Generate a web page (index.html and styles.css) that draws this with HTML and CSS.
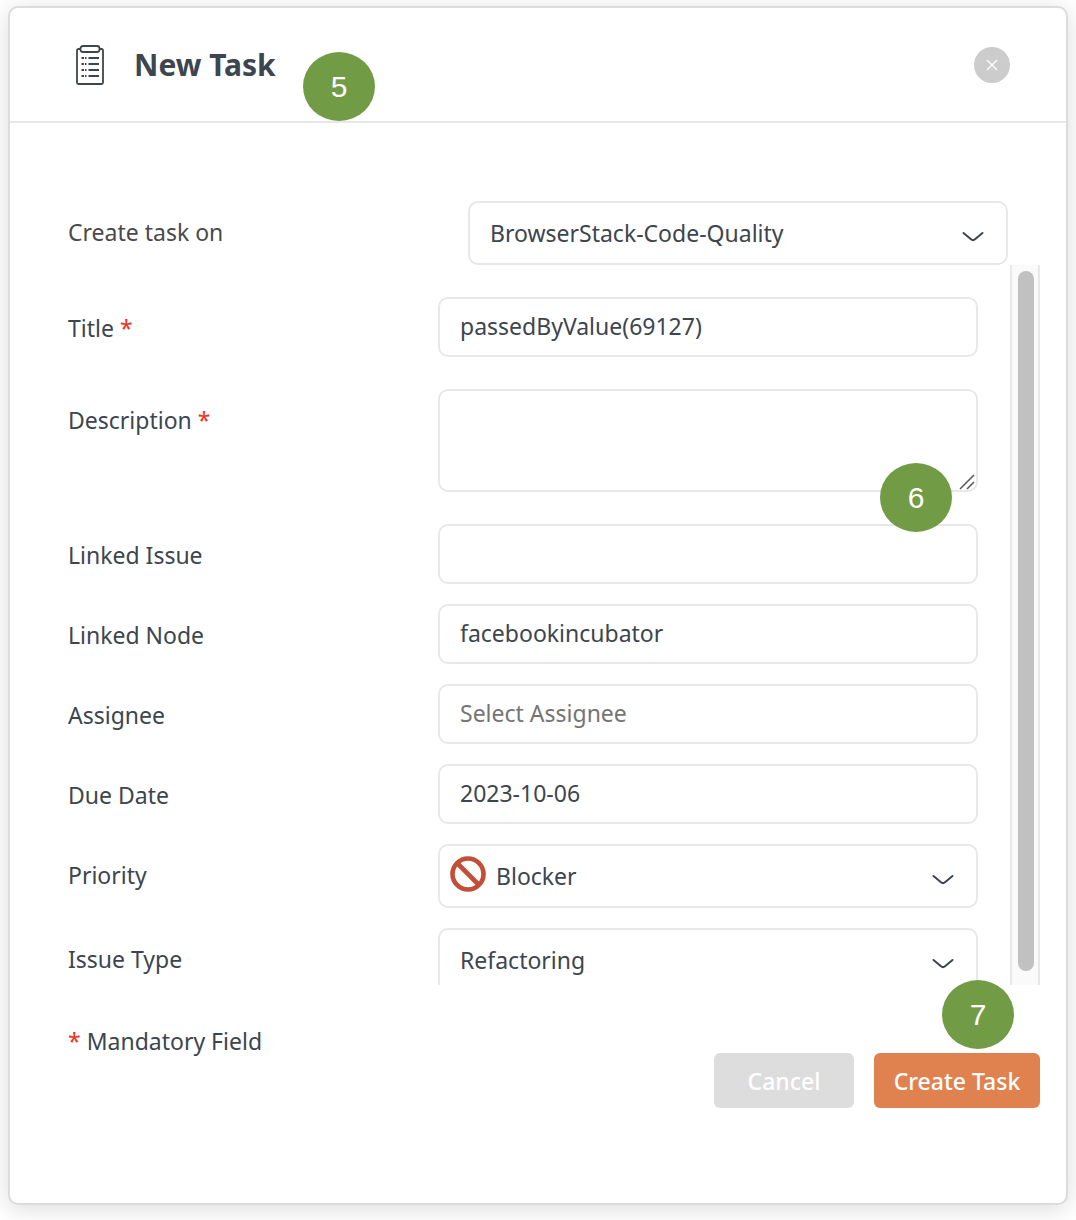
FILE: index.html
```html
<!DOCTYPE html>
<html lang="en">
<head>
    <meta charset="UTF-8">
    <meta name="viewport" content="width=device-width, initial-scale=1.0">
    <title>New Task</title>
    <link rel="stylesheet" href="styles.css">
</head>
<body>

    <form class="modal">
        <!-- Header -->
        <header class="modal-header">
            <svg class="task-icon" width="28" height="40" viewBox="0 0 28 40" fill="none" stroke="#3d454e" stroke-width="1.800">
                <path d="M4.500 4H2.500Q1 4 1 5.500V37.500Q1 39 2.500 39H25.500Q27 39 27 37.500V5.500Q27 4 25.500 4H23.500"/>
                <rect x="4.500" y="1" width="19" height="6" rx="2.500"/>
                <path d="M5.500 13H8M9 13H10.500M12.500 13H23M5.500 19H8M9 19H10.500M12.500 19H23M5.500 25H8M9 25H10.500M12.500 25H23M5.500 31H8M9 31H10.500M12.500 31H23"/>
            </svg>
            <h1>New Task</h1>
            <span class="step step-header">5</span>
            <button type="button" class="close" aria-label="Close">
                <svg width="12" height="12" viewBox="0 0 12 12" stroke="#fff" stroke-width="1.300"><path d="M1 1L11 11M11 1L1 11"/></svg>
            </button>
        </header>

        <div class="modal-body">
            <div class="row project-row">
                <label for="project">Create task on</label>
                <div class="field">
                    <select id="project"><option>BrowserStack-Code-Quality</option></select>
                    <svg class="chevron" width="22" height="12" viewBox="0 0 22 12"><path d="M1.500 2L9 8.300Q11 10 13 8.300L20.500 2"/></svg>
                </div>
            </div>

            <!-- Scrollable fields -->
            <div class="scroll-area">
                <div class="fields">
                    <div class="row row-spaced">
                        <label for="title">Title <span class="required">*</span></label>
                        <div class="field"><input type="text" id="title" value="passedByValue(69127)"></div>
                    </div>
                    <div class="row row-spaced">
                        <label for="description">Description <span class="required">*</span></label>
                        <div class="field">
                            <textarea id="description"></textarea>
                            <svg class="resizer" width="16" height="16" viewBox="0 0 16 16" stroke="#555" stroke-width="1.500"><path d="M1 15L15 1M8 15L15 8"/></svg>
                            <span class="step step-description">6</span>
                        </div>
                    </div>
                    <div class="row">
                        <label for="issue">Linked Issue</label>
                        <div class="field"><input type="text" id="issue"></div>
                    </div>
                    <div class="row">
                        <label for="node">Linked Node</label>
                        <div class="field"><input type="text" id="node" value="facebookincubator"></div>
                    </div>
                    <div class="row">
                        <label for="assignee">Assignee</label>
                        <div class="field"><input type="text" id="assignee" placeholder="Select Assignee"></div>
                    </div>
                    <div class="row">
                        <label for="due">Due Date</label>
                        <div class="field"><input type="text" id="due" value="2023-10-06"></div>
                    </div>
                    <div class="row">
                        <label for="priority">Priority</label>
                        <div class="field">
                            <svg class="blocker" width="36" height="36" viewBox="0 0 36 36" fill="none" stroke="#c24f38" stroke-width="4.600"><circle cx="18" cy="18" r="15.500"/><path d="M7 7L29 29"/></svg>
                            <select id="priority" class="with-icon"><option>Blocker</option></select>
                            <svg class="chevron" width="22" height="12" viewBox="0 0 22 12"><path d="M1.500 2L9 8.300Q11 10 13 8.300L20.500 2"/></svg>
                        </div>
                    </div>
                    <div class="row">
                        <label for="type">Issue Type</label>
                        <div class="field">
                            <select id="type"><option>Refactoring</option></select>
                            <svg class="chevron" width="22" height="12" viewBox="0 0 22 12"><path d="M1.500 2L9 8.300Q11 10 13 8.300L20.500 2"/></svg>
                        </div>
                    </div>
                </div>
                <div class="scrollbar"><div class="thumb"></div></div>
            </div>
        </div>

        <!-- Footer -->
        <footer class="modal-footer">
            <p><span class="required">*</span> Mandatory Field</p>
            <div class="actions">
                <button type="button" class="btn btn-cancel">Cancel</button>
                <button type="submit" class="btn btn-create">Create Task</button>
                <span class="step step-actions">7</span>
            </div>
        </footer>
    </form>

</body>
</html>
```
FILE: styles.css
```css
* {
    box-sizing: border-box;
}
body {
    margin: 0;
    padding: 6px 8px 16px;
    background-color: #fff;
    color: #3d454e;
    font-family: "Noto Sans", sans-serif;
    font-size: 23px;
    line-height: 32px;
}
.modal {
    border: 2px solid #dcdcdc;
    border-radius: 10px;
    background-color: #fff;
    box-shadow: 0 4px 24px rgba(0, 0, 0, 0.14);
}

/* Header */
.modal-header {
    position: relative;
    display: flex;
    align-items: center;
    height: 115px;
    padding: 0 56px 0 66px;
    border-bottom: 2px solid #e8e8ec;
}
.task-icon {
    margin-right: 30px;
}
h1 {
    flex: 1;
    margin: 0;
    font-size: 30px;
    line-height: 40px;
    font-weight: 700;
}
.close {
    display: flex;
    align-items: center;
    justify-content: center;
    width: 36px;
    height: 36px;
    padding: 0;
    border: none;
    border-radius: 50%;
    background-color: #ccc;
}

/* Form rows */
.modal-body {
    padding: 78px 26px 0 58px;
}
.row {
    display: grid;
    grid-template-columns: 370px 1fr;
    margin-bottom: 20px;
}
.row-spaced {
    margin-bottom: 32px;
}
.row label {
    padding-top: 15px;
}
.project-row {
    grid-template-columns: 400px 1fr;
    margin: 0 32px 0 0;
}
.project-row label {
    color: #4a4a4a;
}
.field {
    position: relative;
}
input,
select,
textarea {
    display: block;
    width: 100%;
    height: 60px;
    padding: 0 20px 2px;
    border: 2px solid #e8e8ec;
    border-radius: 10px;
    background-color: #fff;
    color: inherit;
    font: inherit;
}
input::placeholder {
    color: #757575;
    opacity: 1;
}
select {
    height: 64px;
    padding-bottom: 0;
    appearance: none;
}
textarea {
    height: 103px;
    padding: 12px 20px;
    resize: none;
}
.with-icon {
    padding-left: 56px;
}
.chevron {
    position: absolute;
    top: 30px;
    right: 24px;
    fill: none;
    stroke: #3d454e;
    stroke-width: 2;
    stroke-linecap: round;
    pointer-events: none;
}
.resizer {
    position: absolute;
    right: 3px;
    bottom: 2px;
}
.blocker {
    position: absolute;
    top: 12px;
    left: 12px;
}
.required {
    color: #ee3124;
}

/* Scroll area */
.scroll-area {
    display: flex;
    height: 720px;
}
.fields {
    flex: 1;
    padding: 32px 32px 0 0;
    overflow-y: auto;
    scrollbar-width: none;
}
.fields .row:last-child {
    margin-bottom: 0;
}
.scrollbar {
    width: 30px;
    padding: 6px 4px 14px 6px;
    border: solid #e8e8e8;
    border-width: 0 2px;
    background-color: #fafafa;
}
.thumb {
    height: 100%;
    border-radius: 8px;
    background-color: #c1c1c1;
}

/* Footer */
.modal-footer {
    display: flex;
    justify-content: space-between;
    padding: 40px 26px 95px 58px;
}
.modal-footer p {
    margin: 0;
}
.actions {
    position: relative;
    display: flex;
    gap: 20px;
    margin-top: 28px;
}
.btn {
    height: 55px;
    padding: 0;
    border: none;
    border-radius: 6px;
    color: #fff;
    font: inherit;
    font-weight: 500;
}
.btn-cancel {
    width: 140px;
    background-color: #ddd;
}
.btn-create {
    width: 166px;
    background-color: #e0824f;
}

/* Numbered step markers */
.step {
    position: absolute;
    width: 72px;
    height: 69px;
    border-radius: 50%;
    background-color: #729b46;
    color: #fff;
    font-family: "Liberation Sans", sans-serif;
    font-size: 30px;
    line-height: 70px;
    text-align: center;
    z-index: 1;
}
.step-header {
    top: 44px;
    left: 293px;
}
.step-description {
    top: 74px;
    right: 26px;
}
.step-actions {
    top: -73px;
    right: 26px;
}
```
